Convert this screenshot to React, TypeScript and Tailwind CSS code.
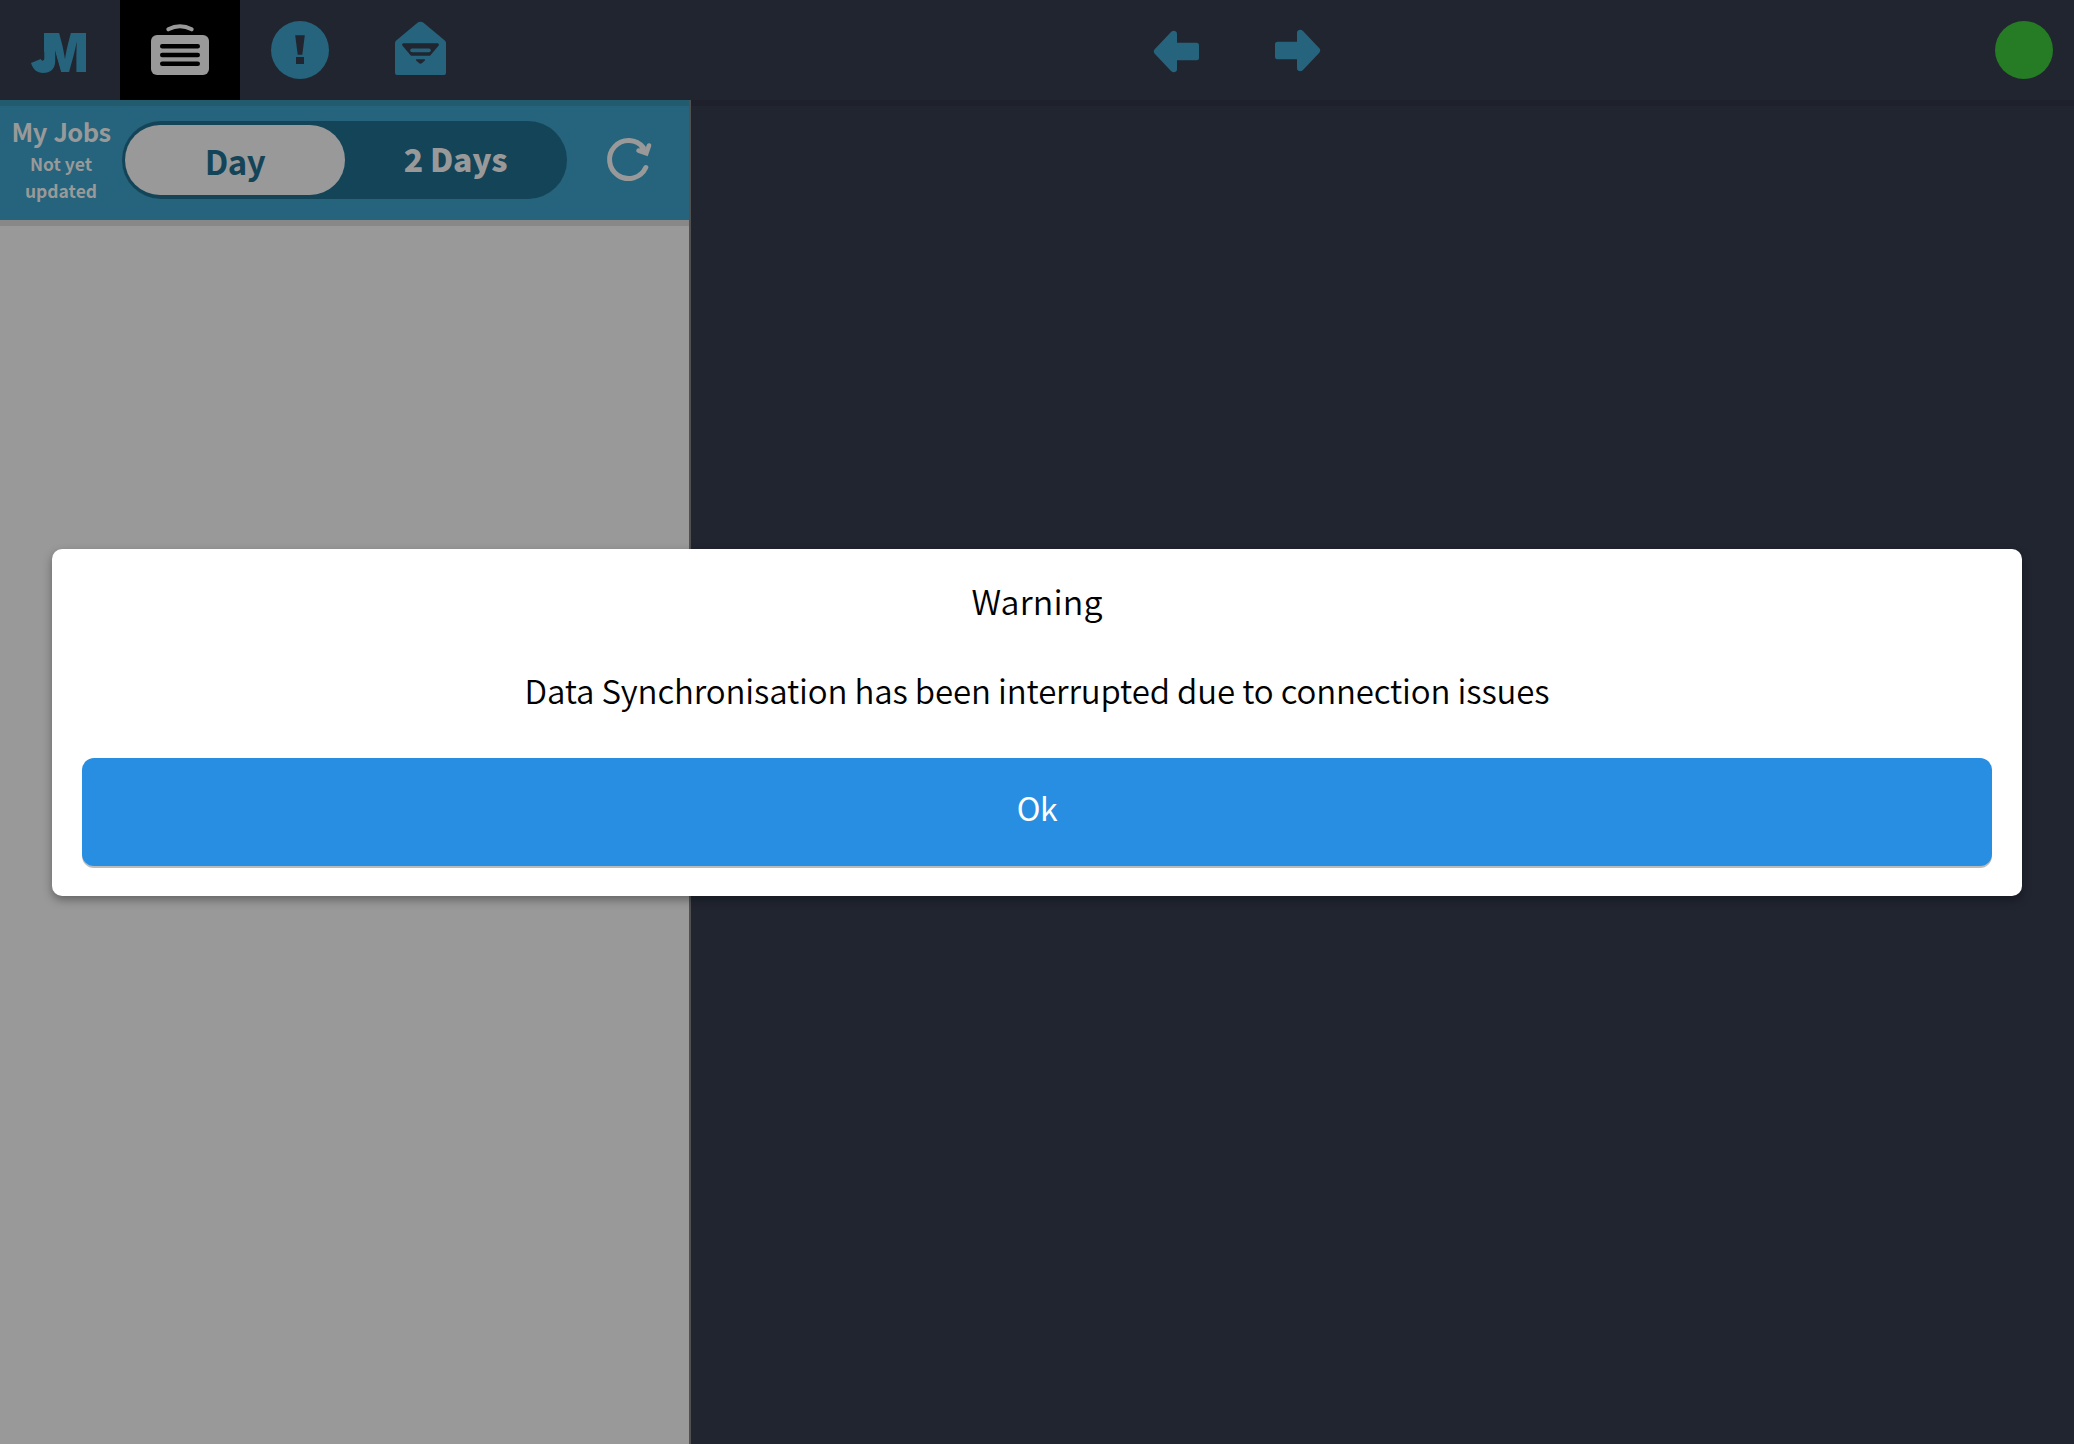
import type { ReactNode } from "react";

function Logo() {
  return (
    <svg width="120" height="100" viewBox="0 0 120 100" fill="#25647c" aria-label="JM">
      <defs>
        <clipPath id="stem">
          <path d="M44 33H86V72H61L55.200 52H44Z" />
        </clipPath>
      </defs>
      <text
        x="41.500"
        y="72"
        fontFamily="Inter"
        fontWeight="900"
        fontSize="53.600"
        textLength="47"
        lengthAdjust="spacingAndGlyphs"
        clipPath="url(#stem)"
      >
        M
      </text>
      <path d="M44.300 33V58.500C44 61 42 61.500 40.700 59L31 63C33 69.500 37 73 43 73C50.500 73 55.200 69 55.200 61V33Z" />
    </svg>
  );
}

function JobsIcon() {
  return (
    <svg width="120" height="100" viewBox="0 0 120 100" fill="none">
      <rect x="31" y="35" width="58" height="40" rx="6" fill="#999" />
      <path d="M48.300 29.300Q60 23 71.700 29.300" stroke="#999" strokeWidth="4" strokeLinecap="round" />
      <path d="M42.200 46.200H77.800M42.200 55H77.800M42.200 63.800H77.800" stroke="#000" strokeWidth="4.400" strokeLinecap="round" />
    </svg>
  );
}

function AlertIcon() {
  return (
    <svg width="120" height="100" viewBox="0 0 120 100">
      <circle cx="60" cy="50" r="29" fill="#25647c" />
      <path d="M55.200 35.300H64.800L62.300 54.800H57.700ZM56 57H64V64H56Z" fill="#212530" />
    </svg>
  );
}

function MailIcon() {
  return (
    <svg width="120" height="100" viewBox="0 0 120 100">
      <path
        d="M35 43Q35 41.500 36.500 40.300L57.500 22.800Q60.500 20.800 63.500 22.800L84.500 40.300Q86 41.500 86 43V73Q86 75 84 75H37Q35 75 35 73Z"
        fill="#25647c"
      />
      <path d="M43.500 43.200H77.500Q79.500 43.600 78.500 45.700L70 55.700H51L42.500 45.700Q41.500 43.600 43.500 43.200Z" fill="#212530" />
      <path d="M52 50.400H69" stroke="#25647c" strokeWidth="3.600" strokeLinecap="round" />
      <path d="M56.500 59.200H64.500Q65.500 59.500 64.800 60.500L61.800 63.300Q60.500 64.200 59.200 63.300L56.200 60.500Q55.500 59.500 56.500 59.200Z" fill="#212530" />
    </svg>
  );
}

function ArrowLeft() {
  return (
    <svg width="120" height="100" viewBox="1116 0 120 100" fill="#25647c">
      <path d="M1154.700 49.300L1171 32Q1173.500 29.700 1176 31.500Q1177 32.300 1177 34V42.700H1196.500Q1199 42.700 1199 45.200V57.800Q1199 60.300 1196.500 60.300H1177V69Q1177 71 1176 71.600Q1173.500 73.300 1171 71L1154.700 53.700Q1152.800 51.500 1154.700 49.300Z" />
    </svg>
  );
}

function ArrowRight() {
  return (
    <svg width="120" height="100" viewBox="1237 0 120 100" fill="#25647c">
      <path d="M1319.300 48.300L1303 31Q1300.500 28.700 1298 30.500Q1297 31.300 1297 33V41.700H1277.500Q1275 41.700 1275 44.200V56.800Q1275 59.300 1277.500 59.300H1297V68Q1297 70 1298 70.600Q1300.500 72.300 1303 70L1319.300 52.700Q1321.200 50.500 1319.300 48.300Z" />
    </svg>
  );
}

function RefreshIcon() {
  return (
    <svg width="48" height="48" viewBox="604 136 48 48" fill="none" stroke="#999" strokeLinecap="round">
      <path d="M645.800 167.500A19 19 0 1 1 643.500 147.800" strokeWidth="5" />
      <path d="M638.500 150.500L646.300 153.300L649 145.500" strokeWidth="4.600" />
      <path d="M641.500 147.500L645 152" strokeWidth="4" />
    </svg>
  );
}

function Tab({ active = false, children }: { active?: boolean; children: ReactNode }) {
  return <button className={active ? "h-[100px] w-[120px] bg-black" : "h-[100px] w-[120px]"}>{children}</button>;
}

export default function App() {
  return (
    <div className="relative flex h-[1444px] w-[2074px] flex-col overflow-hidden bg-[#212530] font-['Noto_Sans_CJK_SC',sans-serif]">
      <header className="flex h-[100px] shrink-0 items-center">
        <nav className="flex">
          <Tab><Logo /></Tab>
          <Tab active><JobsIcon /></Tab>
          <Tab><AlertIcon /></Tab>
          <Tab><MailIcon /></Tab>
        </nav>
        <div className="ml-[636px] flex gap-px">
          <ArrowLeft />
          <ArrowRight />
        </div>
        <div className="mr-[21px] ml-auto size-[58px] rounded-full bg-[#267c24]" />
      </header>

      <div className="flex flex-1">
        <aside className="flex w-[691px] flex-col border-r-2 border-[#505050] bg-[#999]">
          <div className="flex h-[120px] items-start border-t-6 border-[#225a6e] bg-[#25647c] font-bold text-[#999]">
            <div className="flex w-[122px] flex-col items-center pt-[8px] text-center">
              <span className="text-[25.500px] leading-[34px] tracking-[-0.600px] [word-spacing:1.500px] whitespace-nowrap">My Jobs</span>
              <span className="mt-[2px] w-[90px] text-[17.500px] leading-[27px]">Not yet updated</span>
            </div>
            <div className="mt-[15px] flex h-[78px] w-[445px] items-center rounded-full bg-[#144458] p-[3px]">
              <button className="h-[70px] w-[220px] rounded-full bg-[#999] pt-[2px] text-[33px] leading-[68px] tracking-[-0.500px] text-[#144458]">
                Day
              </button>
              <button className="h-[70px] flex-1 pb-[3px] pl-[2px] text-[32px] leading-[67px] font-black tracking-[-0.250px]">
                2 Days
              </button>
            </div>
            <div className="mt-[30px] ml-[37px]">
              <RefreshIcon />
            </div>
          </div>
          <div className="h-[6px] bg-[#888]" />
        </aside>
        <main className="flex-1">
          <div className="h-[6px] bg-[#1e212b]" />
        </main>
      </div>

      <div className="absolute inset-x-[52px] top-[549px] flex h-[347px] flex-col rounded-[10px] bg-white px-[30px] pt-[29px] text-center text-black shadow-[0_4px_10px_rgba(0,0,0,0.35)]">
        <h1 className="text-[34px] leading-[46px] font-[350] tracking-[0.150px]">Warning</h1>
        <p className="mt-[43px] text-[33px] leading-[46px] font-[350] tracking-[-0.140px]">
          Data Synchronisation has been interrupted due to connection issues
        </p>
        <button className="mt-[45px] h-[108px] rounded-[12px] bg-[#288ee2] pb-[10px] text-[32px] tracking-[-0.500px] text-white shadow-[0_2px_0_#bbb]">
          Ok
        </button>
      </div>
    </div>
  );
}
